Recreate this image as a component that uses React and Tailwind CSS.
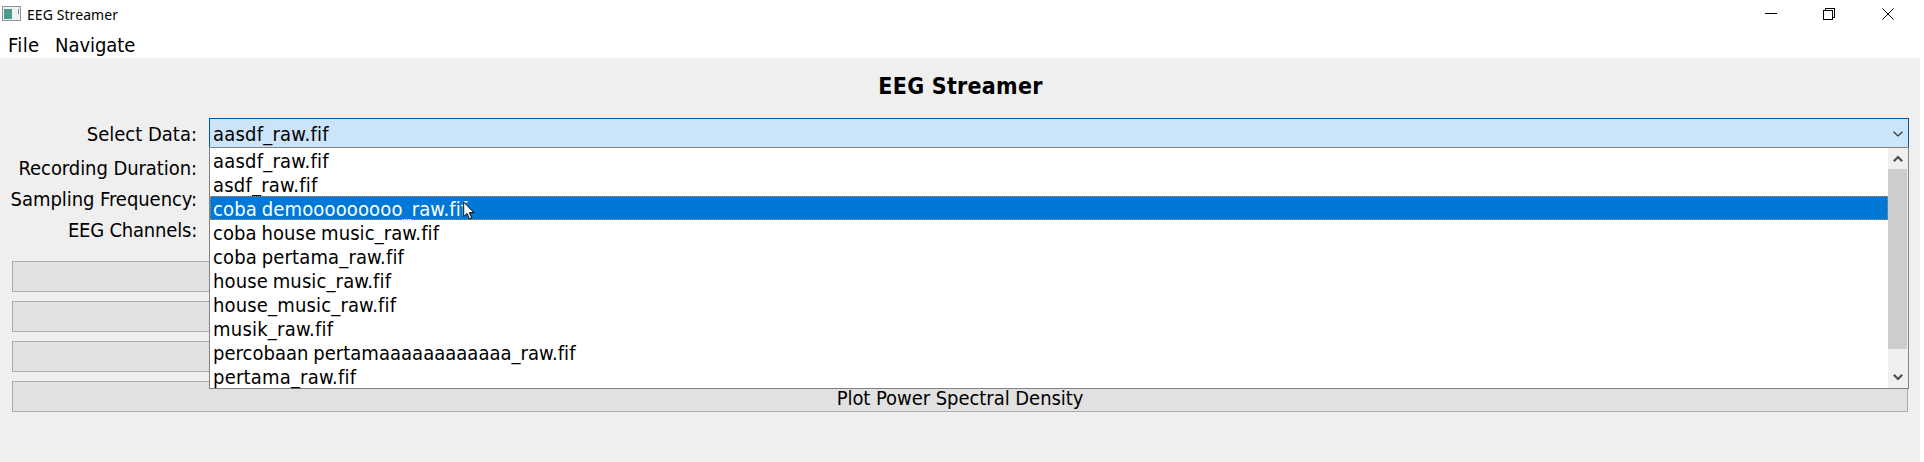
import React from "react";

const files = [
  ["aasdf_raw.fif", "tracking-[0.22px]"],
  ["asdf_raw.fif", "tracking-[0.22px]"],
  ["coba demooooooooo_raw.fif", "tracking-[0.14px]"],
  ["coba house music_raw.fif", "tracking-[0.09px]"],
  ["coba pertama_raw.fif", "tracking-[0.14px]"],
  ["house music_raw.fif", "tracking-[0.12px]"],
  ["house_music_raw.fif", "tracking-[0.16px]"],
  ["musik_raw.fif", "tracking-[0.22px]"],
  ["percobaan pertamaaaaaaaaaaaa_raw.fif", "tracking-[0.03px]"],
  ["pertama_raw.fif", "tracking-[0.2px]"],
];

function TitleBar() {
  return (
    <div className="flex h-[30px] items-center bg-white pl-[2px]">
      <svg width="19" height="15" viewBox="0 0 19 15" className="mb-[3px]">
        <rect x="0.5" y="0.5" width="18" height="14" fill="#eef2f2" stroke="#8f9494" />
        <rect x="2" y="3" width="8" height="10" fill="#4c9a8c" />
        <path d="M16.5 3v5" stroke="#6f8f8d" />
      </svg>
      <span className="mb-[1px] ml-[6px] font-['Noto_Sans','Open_Sans',sans-serif] text-[14px] leading-[20px] tracking-[0.08px] text-black">EEG Streamer</span>
      <div className="ml-auto flex items-center pr-[30px] pb-[2px]">
        <svg width="12" height="12" className="mr-[46px]"><path d="M0 5.5h12" stroke="#000" fill="none" /></svg>
        <svg width="12" height="12" className="mr-[47px]" shapeRendering="crispEdges">
          <path d="M0.5 2.5h9v9h-9zM2.5 2v-1.5h9v9h-2" stroke="#000" fill="none" />
        </svg>
        <svg width="12" height="12"><path d="M0.5 0.5l11 11M11.5 0.5l-11 11" stroke="#000" fill="none" /></svg>
      </div>
    </div>
  );
}

export default function App() {
  return (
    <div className="h-[462px] w-[1924px] overflow-hidden bg-white font-['DejaVu_Sans_Condensed','DejaVu_Sans',sans-serif] text-[20px] leading-[24px] text-black">
      <TitleBar />
      <div className="flex h-[28px] pt-[3px] pl-[8px]">
        <span className="w-[47px] tracking-[0.4px]">File</span>
        <span className="tracking-[-0.05px]">Navigate</span>
      </div>
      <main className="h-[404px] w-[1920px] bg-[#efefef] pt-[14px] pr-[11px] pl-[12px]">
        <h1 className="h-[46px] pt-[1px] text-center text-[23px] leading-[27px] font-bold tracking-[0.25px]">EEG Streamer</h1>
        <div className="flex h-[143px]">
          <div className="flex w-[185px] flex-col items-end text-right whitespace-nowrap">
            <div className="h-[34px] pt-[4px]">Select Data:</div>
            <div className="h-[31px] pt-[4px] tracking-[-0.07px]">Recording Duration:</div>
            <div className="h-[31px] pt-[4px] tracking-[-0.05px]">Sampling Frequency:</div>
            <div className="h-[31px] pt-[4px] tracking-[-0.2px]">EEG Channels:</div>
          </div>
          <div className="relative ml-[12px] grow">
            <div className="flex h-[30px] items-center border border-[#005499] bg-[#cce4f7] pt-[2px] pr-[5px] pl-[3px]">
              <span className="tracking-[0.22px]">aasdf_raw.fif</span>
              <svg width="10" height="6" className="ml-auto"><path d="M0.5 0.7l4.5 4.3l4.5-4.3" stroke="#333" strokeWidth="1.2" fill="none" /></svg>
            </div>
            <div className="absolute top-[29px] left-0 z-10 flex h-[242px] w-full border border-[#828282] bg-white">
              <ul className="grow [word-spacing:-1px]">
                {files.map(([name, tracking], i) => (
                  <li key={name} className={i === 2 ? "h-[24px] bg-[#0078d7] pt-[1px] pl-[3px] text-white outline-1 -outline-offset-1 outline-dotted outline-[#c88a4a]" : "h-[24px] pt-[1px] pl-[3px]"}>
                    <span className={tracking}>{name}</span>
                  </li>
                ))}
              </ul>
              <div className="flex w-[20px] flex-col items-center bg-[#f0f0f0]">
                <svg width="10" height="21" className="shrink-0"><path d="M0.8 13.2l4.2-4.2l4.2 4.2" stroke="#505050" strokeWidth="2.2" fill="none" /></svg>
                <div className="h-[180px] w-[19px] self-start bg-[#cdcdcd]" />
                <svg width="10" height="20" className="mt-auto"><path d="M0.8 6.8l4.2 4.2l4.2-4.2" stroke="#505050" strokeWidth="2.2" fill="none" /></svg>
              </div>
            </div>
          </div>
        </div>
        <div className="mr-[1px] flex flex-col gap-[9px]">
          <button className="h-[31px] border border-[#adadad] bg-[#e1e1e1]" />
          <button className="h-[31px] border border-[#adadad] bg-[#e1e1e1]" />
          <button className="h-[31px] border border-[#adadad] bg-[#e1e1e1]" />
          <button className="h-[31px] border border-[#adadad] bg-[#e1e1e1] pt-[2px] tracking-[-0.05px]">Plot Power Spectral Density</button>
        </div>
      </main>
      <svg width="12" height="20" viewBox="0 0 12 20" className="absolute top-[201px] left-[463px] z-20">
        <path d="M0.7 1v14.5l3.4-3l2.3 5.4l2.3-1l-2.3-5.2h4.6z" fill="#fff" stroke="#000" />
      </svg>
    </div>
  );
}
